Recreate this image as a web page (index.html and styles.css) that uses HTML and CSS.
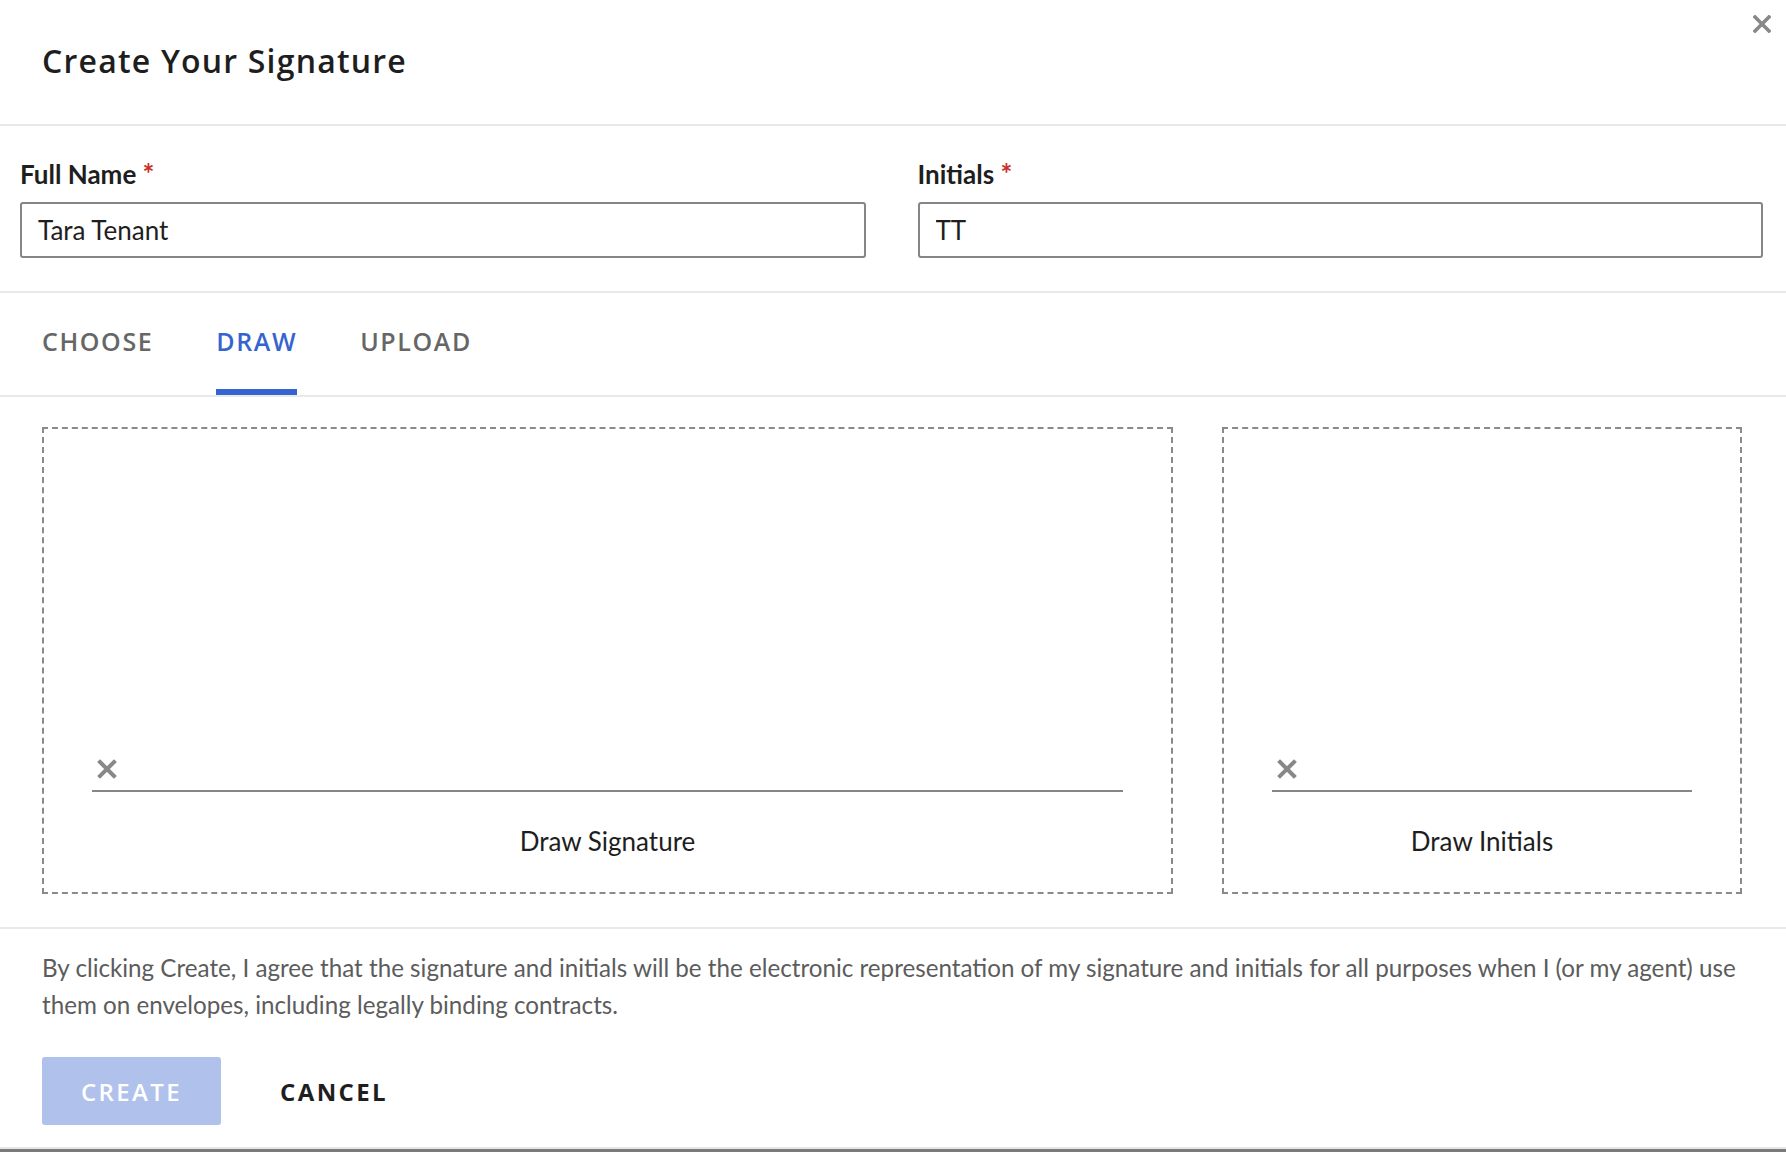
FILE: index.html
```html
<!DOCTYPE html>
<html lang="en">
<head>
    <meta charset="UTF-8">
    <meta name="viewport" content="width=device-width, initial-scale=1.0">
    <title>Create Your Signature</title>
    <link rel="stylesheet" href="styles.css">
</head>
<body>
    <div class="modal">
        <div class="modal-header">
            <h1>Create Your Signature</h1>
            <button class="close-btn" aria-label="Close">
                <svg width="18" height="18" viewBox="0 0 18 18"><path d="M2 2 L16 16 M16 2 L2 16" stroke="#888" stroke-width="3.6" stroke-linecap="square"/></svg>
            </button>
        </div>

        <div class="fields">
            <div class="form-group">
                <label for="fullName">Full Name <span class="req">*</span></label>
                <input type="text" id="fullName" value="Tara Tenant">
            </div>
            <div class="form-group">
                <label for="initials">Initials <span class="req">*</span></label>
                <input type="text" id="initials" value="TT">
            </div>
        </div>

        <div class="tabs">
            <a class="tab">CHOOSE</a>
            <a class="tab active">DRAW</a>
            <a class="tab">UPLOAD</a>
        </div>

        <div class="pads">
            <div class="pad">
                <div class="pad-line">
                    <svg class="pad-clear" width="20" height="20" viewBox="0 0 20 20"><path d="M3 3 L17 17 M17 3 L3 17" stroke="#888" stroke-width="4" stroke-linecap="square"/></svg>
                </div>
                <div class="pad-label">Draw Signature</div>
            </div>
            <div class="pad">
                <div class="pad-line">
                    <svg class="pad-clear" width="20" height="20" viewBox="0 0 20 20"><path d="M3 3 L17 17 M17 3 L3 17" stroke="#888" stroke-width="4" stroke-linecap="square"/></svg>
                </div>
                <div class="pad-label">Draw Initials</div>
            </div>
        </div>

        <div class="modal-footer">
            <p class="legal">By clicking Create, I agree that the signature and initials will be the electronic representation of my signature and initials for all purposes when I (or my agent) use them on envelopes, including legally binding contracts.</p>
            <div class="actions">
                <button class="btn btn-primary" disabled>CREATE</button>
                <button class="btn btn-link">CANCEL</button>
            </div>
        </div>
        <div class="page-edge"></div>
    </div>
</body>
</html>
```

FILE: styles.css
```css
body {
    margin: 0;
    font-family: 'Lato', 'Liberation Sans', sans-serif;
    background-color: #fff;
    color: #1e1e1e;
}
.modal {
    position: relative;
    width: 100%;
    height: 1152px;
    overflow: hidden;
}
.modal-header {
    height: 126px;
    box-sizing: border-box;
    display: flex;
    align-items: center;
    padding: 0 0 4px 42px;
    border-bottom: 2px solid #e9e9e9;
}
h1 {
    margin: 0;
    font-family: 'Open Sans', sans-serif;
    font-weight: 600;
    font-size: 32px;
    letter-spacing: 1.2px;
    color: #1e1e1e;
}
.close-btn {
    position: absolute;
    top: 15px;
    right: 15px;
    width: 18px;
    height: 18px;
    padding: 0;
    border: none;
    background: none;
    cursor: pointer;
}
.close-btn svg {
    display: block;
}
.fields {
    display: grid;
    grid-template-columns: 1fr 1fr;
    column-gap: 52px;
    padding: 32px 23px 33px 20px;
    border-bottom: 2px solid #e9e9e9;
}
.form-group label {
    display: block;
    font-size: 26px;
    line-height: 30px;
    font-weight: bold;
    color: #1e1e1e;
    margin-bottom: 13px;
}
.req {
    color: #c9302c;
    font-size: 28px;
}
.form-group input {
    display: block;
    width: 100%;
    height: 56px;
    box-sizing: border-box;
    padding: 0 16px;
    border: 2px solid #868686;
    border-radius: 3px;
    font-family: 'Lato', sans-serif;
    font-size: 26px;
    color: #1e1e1e;
}
.tabs {
    display: flex;
    gap: 63px;
    padding-left: 42px;
    border-bottom: 2px solid #e9e9e9;
}
.tab {
    display: block;
    padding: 32px 0 32px;
    font-family: 'Open Sans', sans-serif;
    font-weight: 600;
    font-size: 25px;
    line-height: 32px;
    letter-spacing: 1.6px;
    color: #666;
    border-bottom: 6px solid transparent;
    cursor: pointer;
}
.tab.active {
    color: #3564d0;
    border-bottom-color: #3564d0;
}
.pads {
    display: grid;
    grid-template-columns: 1fr 520px;
    column-gap: 49px;
    padding: 30px 44px 33px 42px;
    border-bottom: 2px solid #e9e9e9;
}
.pad {
    height: 467px;
    box-sizing: border-box;
    border: 2px dashed #8a8a8a;
    display: flex;
    flex-direction: column;
    justify-content: flex-end;
    padding: 0 48px 35px;
}
.pad-line {
    position: relative;
    height: 32px;
    border-bottom: 2px solid #868686;
}
.pad-clear {
    position: absolute;
    left: 5px;
    top: 1px;
}
.pad-label {
    text-align: center;
    font-size: 26px;
    line-height: 32px;
    margin-top: 33px;
    color: #1e1e1e;
}
.modal-footer {
    padding: 21px 44px 0 42px;
}
.legal {
    margin: 0;
    font-size: 24.2px;
    line-height: 36.5px;
    color: #5c5c5c;
}
.actions {
    display: flex;
    align-items: center;
    gap: 45px;
    margin-top: 34px;
}
.btn {
    font-family: 'Open Sans', sans-serif;
    font-weight: 600;
    font-size: 24px;
    letter-spacing: 2.4px;
    border: none;
    border-radius: 3px;
    height: 68px;
    cursor: pointer;
}
.btn-primary {
    width: 179px;
    background-color: #b0c2ec;
    color: #fff;
}
.btn-link {
    background: none;
    color: #1e1e1e;
    font-weight: 700;
    padding: 0 14px;
}
.page-edge {
    position: absolute;
    left: 0;
    right: 0;
    bottom: 0;
    height: 3px;
    background-color: #7a7a7a;
    border-top: 2px solid #e6e6e6;
}
```
